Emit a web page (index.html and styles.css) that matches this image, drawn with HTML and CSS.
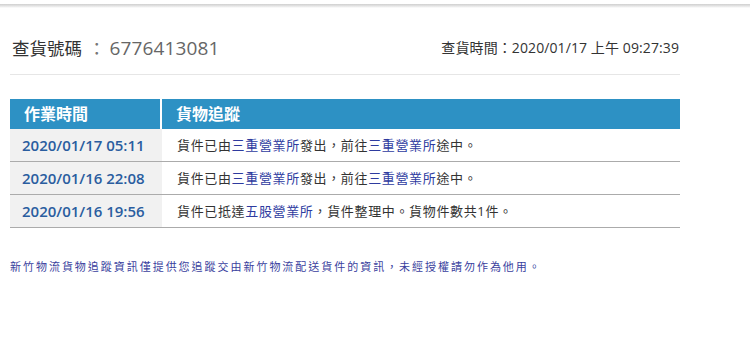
FILE: index.html
```html
<!DOCTYPE html>
<html lang="zh-Hant">
<head>
<meta charset="utf-8">
<title>查貨</title>
<link rel="stylesheet" href="styles.css">
</head>
<body>
<div class="topshade"></div>
<div class="wrap">
  <div class="head">
    <div class="title"><span class="label">查貨號碼</span><span class="colon">：</span><span class="num">6776413081</span></div>
    <div class="qtime">查貨時間：2020/01/17 上午 09:27:39</div>
  </div>
  <table class="track">
    <thead>
      <tr><th class="c1">作業時間</th><th class="c2">貨物追蹤</th></tr>
    </thead>
    <tbody>
      <tr><td class="date">2020/01/17 05:11</td><td class="desc">貨件已由<a class="lnk">三重營業所</a>發出，前往<a class="lnk">三重營業所</a>途中。</td></tr>
      <tr><td class="date">2020/01/16 22:08</td><td class="desc">貨件已由<a class="lnk">三重營業所</a>發出，前往<a class="lnk">三重營業所</a>途中。</td></tr>
      <tr><td class="date">2020/01/16 19:56</td><td class="desc">貨件已抵達<a class="lnk">五股營業所</a>，貨件整理中。貨物件數共1件。</td></tr>
    </tbody>
  </table>
  <p class="note">新竹物流貨物追蹤資訊僅提供您追蹤交由新竹物流配送貨件的資訊，未經授權請勿作為他用。</p>
</div>
</body>
</html>
```
FILE: styles.css
```css
html, body {
  margin: 0;
  padding: 0;
  background: #fff;
}
body {
  font-family: "Open Sans", "Noto Sans CJK TC", sans-serif;
  color: #333;
}
.topshade {
  height: 8px;
  background: linear-gradient(to bottom, #fff 0, #fff 4px, #cfcfcf 4px, #e4e4e4 6px, #fff 8px);
}
.wrap {
  width: 670px;
  margin-left: 10px;
}
.head {
  margin-top: 14px;
  height: 52px;
  display: flex;
  align-items: center;
  justify-content: space-between;
  border-bottom: 1px solid #e6e6e6;
}
.title {
  padding-left: 2px;
  font-size: 17.5px;
  line-height: 24px;
}
.title .label {
  color: #333;
}
.title .colon {
  color: #777;
  margin: 0 4px 0 6px;
}
.title .num {
  color: #666;
  font-size: 19px;
  letter-spacing: 0.15px;
}
.qtime {
  padding-right: 1px;
  font-size: 14px;
  color: #333;
  line-height: 20px;
  letter-spacing: 0.1px;
}
.track {
  margin-top: 24px;
  width: 670px;
  border-collapse: separate;
  border-spacing: 0;
}
.track th {
  height: 30px;
  padding: 0;
  background: #2d91c4;
  color: #fff;
  text-align: left;
  font-size: 16px;
  font-weight: 700;
  line-height: 30px;
}
.track th.c1 {
  width: 136px;
  padding-left: 14px;
  border-right: 2px solid #fff;
}
.track th.c2 {
  padding-left: 14px;
}
.track td {
  height: 32px;
  padding: 0;
  border-bottom: 1px solid #ababab;
  line-height: 20px;
}
.track td.date {
  background: #f1f1f1;
  color: #2a5d9f;
  font-size: 15px;
  font-weight: 600;
  padding-left: 12px;
}
.track td.desc {
  padding-left: 15px;
  font-size: 13px;
  letter-spacing: 0.65px;
  color: #333;
}
.lnk {
  color: #2e3b9f;
  text-decoration: none;
}
.note {
  margin: 31px 0 0;
  font-size: 11px;
  line-height: 16px;
  letter-spacing: 1.97px;
  color: #3a3f9e;
}
```
